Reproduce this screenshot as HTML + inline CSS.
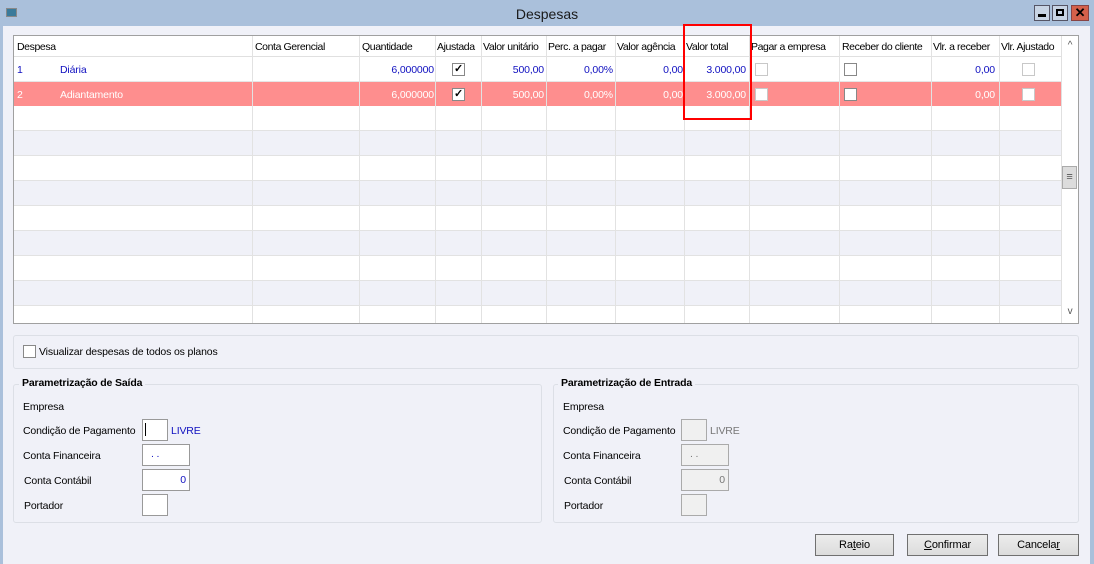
<!DOCTYPE html>
<html><head><meta charset="utf-8"><style>
*{margin:0;padding:0;box-sizing:border-box}
body{width:1094px;height:564px;position:relative;overflow:hidden;background:#f0f1f8;font-family:"Liberation Sans",sans-serif;font-size:10.5px;letter-spacing:-0.15px;color:#000}
.a{position:absolute}
.t{white-space:nowrap}
.cb{position:absolute;width:13px;height:13px;border:1px solid #888;background:#fff}
.cbl{border-color:#c8c8c8}
.inp{position:absolute;height:22px;border:1px solid #999;background:#fff}
.dis{background:#f0f0f0;border-color:#aaa}
.btn{position:absolute;height:22px;border:1px solid #707070;background:linear-gradient(#ececec,#dcdcdc);text-align:center;line-height:20px;font-size:11px}
.grp{position:absolute;border:1px solid #dcdfe6;border-radius:3px}
</style></head><body>
<div class="a" style="left:0;top:0;width:1094px;height:26px;background:#aac0db"></div>
<div class="a" style="left:0;top:0;width:3px;height:564px;background:#aac0db"></div>
<div class="a" style="left:1090px;top:0;width:4px;height:564px;background:#aac0db"></div>
<div class="a" style="left:6px;top:8px;width:11px;height:9px;background:#3a7a9a;border:1px solid #888"></div>
<div class="a t" style="left:0;width:1094px;top:6px;text-align:center;font-size:14px;letter-spacing:0;color:#1a1a1a">Despesas</div>
<div class="a" style="left:1034px;top:5px;width:16px;height:16px;border:1px solid #556;background:#c8d4e4"><div class="a" style="left:3px;top:8px;width:8px;height:3px;background:#000"></div></div>
<div class="a" style="left:1052px;top:5px;width:16px;height:16px;border:1px solid #556;background:#c8d4e4"><div class="a" style="left:3px;top:3px;width:8px;height:7px;border:2px solid #000"></div></div>
<div class="a t" style="left:1071px;top:5px;width:18px;height:16px;background:#d4604a;border:1px solid #844;color:#000;font-weight:bold;text-align:center;line-height:14px;font-size:13px">✕</div>

<div class="a" style="left:13px;top:35px;width:1066px;height:289px;border:1px solid #a0a0a0;background:#fff"></div>
<div class="a" style="left:14px;top:36px;width:1047px;height:21px;background:#fff;border-bottom:1px solid #e0e0e0"></div>
<div class="a" style="left:14px;top:57px;width:1047px;height:25px;background:#fff;border-bottom:1px solid #e6e6e6"></div>
<div class="a" style="left:14px;top:82px;width:1047px;height:24px;background:#fe8e8e"></div>
<div class="a" style="left:14px;top:106px;width:1047px;height:25px;background:#fff;border-bottom:1px solid #e2e2e2"></div>
<div class="a" style="left:14px;top:131px;width:1047px;height:25px;background:#f0f1f8;border-bottom:1px solid #e2e2e2"></div>
<div class="a" style="left:14px;top:156px;width:1047px;height:25px;background:#fff;border-bottom:1px solid #e2e2e2"></div>
<div class="a" style="left:14px;top:181px;width:1047px;height:25px;background:#f0f1f8;border-bottom:1px solid #e2e2e2"></div>
<div class="a" style="left:14px;top:206px;width:1047px;height:25px;background:#fff;border-bottom:1px solid #e2e2e2"></div>
<div class="a" style="left:14px;top:231px;width:1047px;height:25px;background:#f0f1f8;border-bottom:1px solid #e2e2e2"></div>
<div class="a" style="left:14px;top:256px;width:1047px;height:25px;background:#fff;border-bottom:1px solid #e2e2e2"></div>
<div class="a" style="left:14px;top:281px;width:1047px;height:25px;background:#f0f1f8;border-bottom:1px solid #e2e2e2"></div>
<div class="a" style="left:14px;top:306px;width:1047px;height:17px;background:#fff"></div>
<div class="a" style="left:252px;top:36px;width:1px;height:287px;background:#e2e2e2"></div>
<div class="a" style="left:359px;top:36px;width:1px;height:287px;background:#e2e2e2"></div>
<div class="a" style="left:435px;top:36px;width:1px;height:287px;background:#e2e2e2"></div>
<div class="a" style="left:481px;top:36px;width:1px;height:287px;background:#e2e2e2"></div>
<div class="a" style="left:546px;top:36px;width:1px;height:287px;background:#e2e2e2"></div>
<div class="a" style="left:615px;top:36px;width:1px;height:287px;background:#e2e2e2"></div>
<div class="a" style="left:684px;top:36px;width:1px;height:287px;background:#e2e2e2"></div>
<div class="a" style="left:749px;top:36px;width:1px;height:287px;background:#e2e2e2"></div>
<div class="a" style="left:839px;top:36px;width:1px;height:287px;background:#e2e2e2"></div>
<div class="a" style="left:931px;top:36px;width:1px;height:287px;background:#e2e2e2"></div>
<div class="a" style="left:999px;top:36px;width:1px;height:287px;background:#e2e2e2"></div>
<div style="letter-spacing:-0.4px">
<div class="a t" style="left:17px;top:41px">Despesa</div>
<div class="a t" style="left:255px;top:41px">Conta Gerencial</div>
<div class="a t" style="left:362px;top:41px">Quantidade</div>
<div class="a t" style="left:437px;top:41px">Ajustada</div>
<div class="a t" style="left:483px;top:41px">Valor unitário</div>
<div class="a t" style="left:548px;top:41px">Perc. a pagar</div>
<div class="a t" style="left:617px;top:41px">Valor agência</div>
<div class="a t" style="left:686px;top:41px">Valor total</div>
<div class="a t" style="left:751px;top:41px">Pagar a empresa</div>
<div class="a t" style="left:842px;top:41px">Receber do cliente</div>
<div class="a t" style="left:933px;top:41px">Vlr. a receber</div>
<div class="a t" style="left:1001px;top:41px">Vlr. Ajustado</div>
</div>
<div style="color:#1010c0">
<div class="a t" style="left:17px;top:64px">1</div>
<div class="a t" style="left:60px;top:64px">Diária</div>
<div class="a t" style="left:359px;width:75px;top:64px;text-align:right">6,000000</div>
<div class="a t" style="left:481px;width:63px;top:64px;text-align:right">500,00</div>
<div class="a t" style="left:546px;width:67px;top:64px;text-align:right">0,00%</div>
<div class="a t" style="left:615px;width:68px;top:64px;text-align:right">0,00</div>
<div class="a t" style="left:684px;width:62px;top:64px;text-align:right">3.000,00</div>
<div class="a t" style="left:931px;width:64px;top:64px;text-align:right">0,00</div>
</div>
<div class="cb" style="left:452px;top:63px;text-align:center;line-height:11px;font-size:11px;font-weight:bold">✓</div>
<div class="cb cbl" style="left:755px;top:63px"></div>
<div class="cb" style="left:844px;top:63px"></div>
<div class="cb cbl" style="left:1022px;top:63px"></div>
<div style="color:#fff">
<div class="a t" style="left:17px;top:89px">2</div>
<div class="a t" style="left:60px;top:89px">Adiantamento</div>
<div class="a t" style="left:359px;width:75px;top:89px;text-align:right">6,000000</div>
<div class="a t" style="left:481px;width:63px;top:89px;text-align:right">500,00</div>
<div class="a t" style="left:546px;width:67px;top:89px;text-align:right">0,00%</div>
<div class="a t" style="left:615px;width:68px;top:89px;text-align:right">0,00</div>
<div class="a t" style="left:684px;width:62px;top:89px;text-align:right">3.000,00</div>
<div class="a t" style="left:931px;width:64px;top:89px;text-align:right">0,00</div>
</div>
<div class="cb" style="left:452px;top:88px;text-align:center;line-height:11px;font-size:11px;font-weight:bold">✓</div>
<div class="cb cbl" style="left:755px;top:88px"></div>
<div class="cb" style="left:844px;top:88px"></div>
<div class="cb cbl" style="left:1022px;top:88px"></div>
<div class="a" style="left:1061px;top:36px;width:17px;height:287px;background:#fff;border-left:1px solid #e0e0e0"></div>
<div class="a t" style="left:1063px;top:40px;width:14px;text-align:center;font-size:10px;color:#555">^</div>
<div class="a" style="left:1062px;top:166px;width:15px;height:23px;background:#dcdcdc;border:1px solid #aaa;text-align:center;line-height:20px;color:#555;font-size:11px">≡</div>
<div class="a t" style="left:1063px;top:306px;width:14px;text-align:center;font-size:10px;color:#555">v</div>
<div class="a" style="left:683px;top:24px;width:69px;height:96px;border:2px solid #f00"></div>

<div class="grp" style="left:13px;top:335px;width:1066px;height:34px"></div>
<div class="cb" style="left:23px;top:345px"></div>
<div class="a t" style="left:39px;top:346px">Visualizar despesas de todos os planos</div>

<div class="grp" style="left:13px;top:384px;width:529px;height:139px"></div>
<div class="a t" style="left:19px;top:377px;background:#f0f1f8;padding:0 3px;font-weight:bold">Parametrização de Saída</div>
<div class="a t" style="left:23px;top:401px">Empresa</div>
<div class="a t" style="left:23px;top:425px">Condição de Pagamento</div>
<div class="inp" style="left:142px;top:419px;width:26px"><div class="a" style="left:2px;top:3px;width:1px;height:13px;background:#000"></div></div>
<div class="a t" style="left:171px;top:425px;color:#1010c0">LIVRE</div>
<div class="a t" style="left:23px;top:450px">Conta Financeira</div>
<div class="inp" style="left:142px;top:444px;width:48px"><span class="a" style="left:8px;top:3px;color:#1010c0">. .</span></div>
<div class="a t" style="left:24px;top:475px">Conta Contábil</div>
<div class="inp" style="left:142px;top:469px;width:48px"><span class="a" style="right:3px;top:4px;color:#1010c0">0</span></div>
<div class="a t" style="left:24px;top:500px">Portador</div>
<div class="inp" style="left:142px;top:494px;width:26px"></div>

<div class="grp" style="left:553px;top:384px;width:526px;height:139px"></div>
<div class="a t" style="left:558px;top:377px;background:#f0f1f8;padding:0 3px;font-weight:bold">Parametrização de Entrada</div>
<div class="a t" style="left:563px;top:401px">Empresa</div>
<div class="a t" style="left:563px;top:425px">Condição de Pagamento</div>
<div class="inp dis" style="left:681px;top:419px;width:26px"></div>
<div class="a t" style="left:710px;top:425px;color:#777">LIVRE</div>
<div class="a t" style="left:563px;top:450px">Conta Financeira</div>
<div class="inp dis" style="left:681px;top:444px;width:48px"><span class="a" style="left:8px;top:3px;color:#777">. .</span></div>
<div class="a t" style="left:564px;top:475px">Conta Contábil</div>
<div class="inp dis" style="left:681px;top:469px;width:48px"><span class="a" style="right:3px;top:4px;color:#777">0</span></div>
<div class="a t" style="left:564px;top:500px">Portador</div>
<div class="inp dis" style="left:681px;top:494px;width:26px"></div>

<div class="btn" style="left:815px;top:534px;width:79px">Ra<u>t</u>eio</div>
<div class="btn" style="left:907px;top:534px;width:81px"><u>C</u>onfirmar</div>
<div class="btn" style="left:998px;top:534px;width:81px">Cancela<u>r</u></div>
</body></html>
